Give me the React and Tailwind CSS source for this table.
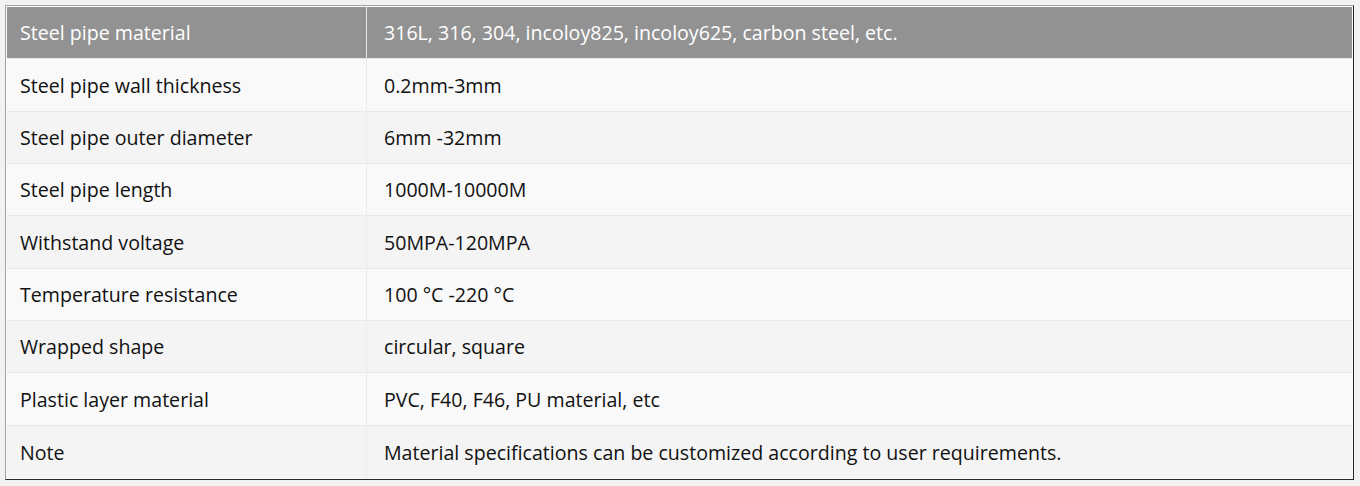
import React from "react";

const rows = [
  ["Steel pipe wall thickness", "0.2mm-3mm"],
  ["Steel pipe outer diameter", "6mm -32mm"],
  ["Steel pipe length", "1000M-10000M"],
  ["Withstand voltage", "50MPA-120MPA"],
  ["Temperature resistance", "100 °C -220 °C"],
  ["Wrapped shape", "circular, square"],
  ["Plastic layer material", "PVC, F40, F46, PU material, etc"],
  ["Note", "Material specifications can be customized according to user requirements."],
];

export default function App() {
  return (
    <div
      className="w-[1360px] h-[486px] bg-[#f2f2f2] pt-[5px] pl-[5px]"
      style={{ fontFamily: '"Open Sans", "Noto Sans", sans-serif' }}
    >
      <div className="w-[1349px] h-[475px] border border-t-[#a3a3a3] border-l-[#a3a3a3] border-r-[#262626] border-b-[#262626] bg-[#fafafa] p-px">
        <div className="grid grid-rows-[repeat(9,1fr)] h-full text-[19.6px] text-[#111]">
          <div className="flex bg-[#929292] text-white border-b border-[#e6e6e6]">
            <div className="w-[360px] flex items-center pl-[13px] pt-px border-r border-[#e6e6e6]">
              Steel pipe material
            </div>
            <div className="flex-1 flex items-center pl-[17px] pt-px">
              316L, 316, 304, incoloy825, incoloy625, carbon steel, etc.
            </div>
          </div>
          {rows.map(([a, b], i) => (
            <div
              key={i}
              className={
                "flex " +
                (i % 2 === 0 ? "bg-[#f9f9f9]" : "bg-[#f4f4f4]") +
                (i < rows.length - 1 ? " border-b border-[#e9e9e9]" : "")
              }
            >
              <div className="w-[360px] flex items-center pl-[13px] pt-px border-r border-[#ebebeb]">
                {a}
              </div>
              <div className="flex-1 flex items-center pl-[17px] pt-px">{b}</div>
            </div>
          ))}
        </div>
      </div>
    </div>
  );
}
